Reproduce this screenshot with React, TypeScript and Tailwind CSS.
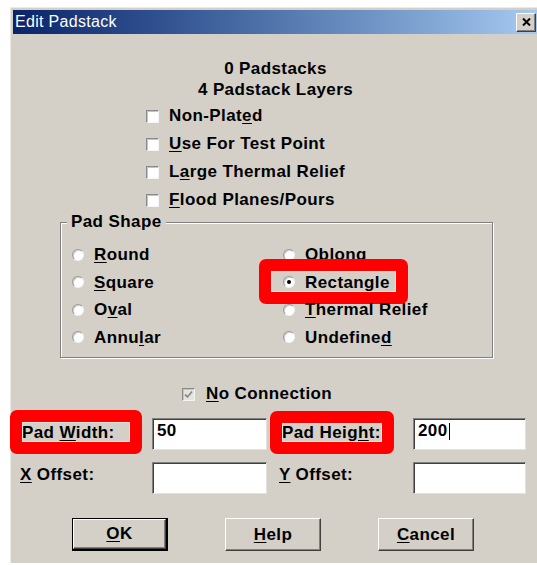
import type { ReactNode } from "react";

const face = "font-['Liberation_Sans',Arial,sans-serif]";

// "&" marks the access-key letter, drawn underlined like a Win32 label
function Mnemonic({ text }: { text: string }) {
  const i = text.indexOf("&");
  if (i < 0) return <>{text}</>;
  return (
    <>
      {text.slice(0, i)}
      <span className="underline decoration-1 underline-offset-[2px]">{text[i + 1]}</span>
      {text.slice(i + 2)}
    </>
  );
}

function CheckBox({ checked, disabled }: { checked?: boolean; disabled?: boolean }) {
  return (
    <span
      className={`w-[13px] h-[13px] shrink-0 flex items-center justify-center border border-t-[#8a8a8a] border-l-[#8a8a8a] border-r-[#f4f4f4] border-b-[#f4f4f4] shadow-[inset_1px_1px_0_#c4c4c4] ${
        disabled ? "bg-[#e6e4df]" : "bg-white"
      }`}
    >
      {checked && (
        <svg width="9" height="9" viewBox="0 0 9 9">
          <path d="M1 4.5 L3.5 7 L8 1.5" fill="none" stroke={disabled ? "#8c8c8c" : "#000"} strokeWidth="1.8" />
        </svg>
      )}
    </span>
  );
}

function Radio({ selected }: { selected?: boolean }) {
  return (
    <span className="w-[12px] h-[12px] shrink-0 rounded-full bg-white flex items-center justify-center border border-t-[#9a9a9a] border-l-[#9a9a9a] border-r-[#f2f2f2] border-b-[#f2f2f2] shadow-[inset_1px_1px_0_#d0d0d0]">
      {selected && <span className="w-[4px] h-[4px] rounded-full bg-black" />}
    </span>
  );
}

// red callout drawn over a control
function Callout({ className }: { className: string }) {
  return (
    <span
      className={`absolute border-[12px] border-[#ff0000] rounded-[7px] shadow-[inset_0_0_0_1px_#e8e6e1] pointer-events-none ${className}`}
    />
  );
}

function Field({ value, caret }: { value?: string; caret?: boolean }) {
  return (
    <div className="h-[32px] bg-white flex items-center pl-[4px] pb-[6px] border border-t-[#808080] border-l-[#808080] border-r-[#e4e2dc] border-b-[#e4e2dc] shadow-[inset_1px_1px_0_#404040]">
      {value}
      {caret && <span className="w-px h-[17px] bg-black ml-[1px]" />}
    </div>
  );
}

function Button({ label, isDefault }: { label: string; isDefault?: boolean }) {
  return (
    <div className={`w-[96px] h-[33px] ${isDefault ? "border border-black border-r-2 border-b-2" : ""}`}>
      <div className="w-full h-full flex items-center justify-center border border-t-white border-l-white border-r-[#404040] border-b-[#404040] shadow-[inset_-1px_-1px_0_#808080]">
        <Mnemonic text={label} />
      </div>
    </div>
  );
}

function Row({ children }: { children: ReactNode }) {
  return <div className="h-[28px] flex items-center gap-[10px]">{children}</div>;
}

const flags = ["Non-Plat&ed", "&Use For Test Point", "L&arge Thermal Relief", "&Flood Planes/Pours"];

const shapes: { label: string; selected?: boolean; callout?: boolean }[] = [
  { label: "&Round" },
  { label: "Oblong" },
  { label: "&Square" },
  { label: "Rectangle", selected: true, callout: true },
  { label: "O&val" },
  { label: "&Thermal Relief" },
  { label: "Annu&lar" },
  { label: "Undefine&d" },
];

export default function App() {
  return (
    <div className={`w-[537px] h-[565px] overflow-hidden bg-white pt-[7px] pl-[10px] ${face}`}>
      <div className="w-[530px] bg-[#d4d0c8] border-t border-l border-[#eceae5] p-[2px] pb-0">
        {/* caption */}
        <div className="h-[24px] flex items-center justify-between pl-[2px] pr-[2px] bg-linear-to-r from-[#0a246a] to-[#a6caf0]">
          <span className="text-[16px] tracking-[0.3px] text-white leading-none">Edit Padstack</span>
          <div className="w-[20px] h-[19px] bg-[#d4d0c8] flex items-center justify-center border border-t-white border-l-white border-r-[#404040] border-b-[#404040] shadow-[inset_-1px_-1px_0_#808080]">
            <svg width="9" height="8" viewBox="0 0 9 8">
              <path d="M1 0.5 L8 7.5 M8 0.5 L1 7.5" stroke="#000" strokeWidth="2" />
            </svg>
          </div>
        </div>

        <div className="flex flex-col pt-[24px] pb-[12px] text-[17px] tracking-[0.4px] font-bold text-black">
          <div className="h-[21px] leading-[21px] text-center">0 Padstacks</div>
          <div className="h-[21px] leading-[21px] text-center">4 Padstack Layers</div>

          <div className="mt-[2px] pl-[133px] flex flex-col">
            {flags.map((f) => (
              <Row key={f}>
                <CheckBox />
                <span>
                  <Mnemonic text={f} />
                </span>
              </Row>
            ))}
          </div>

          {/* Pad Shape group */}
          <div className="relative mt-[8px] ml-[47px] w-[433px] border border-[#808080] shadow-[inset_1px_1px_0_#fff,1px_1px_0_#fff] pt-[18px] pb-[6px] pl-[11px]">
            <span className="absolute left-[6px] top-[-12px] px-[4px] leading-[22px] bg-[#d4d0c8]">Pad Shape</span>
            <div className="grid grid-cols-[211px_1fr]">
              {shapes.map((s) => (
                <div key={s.label} className="relative h-[27.5px] flex items-center gap-[10px]">
                  <Radio selected={s.selected} />
                  <span>
                    <Mnemonic text={s.label} />
                  </span>
                  {s.callout && <Callout className="left-[-24px] top-[-10px] w-[149px] h-[45px]" />}
                </div>
              ))}
            </div>
          </div>

          <div className="mt-[24px] h-[24px] pl-[169px] flex items-center gap-[11px]">
            <CheckBox checked disabled />
            <span>
              <Mnemonic text="&No Connection" />
            </span>
          </div>

          {/* size fields */}
          <div className="mt-[12px] h-[32px] flex items-center">
            <div className="w-[139px] pl-[9px]">
              <span className="relative inline-block leading-[20px] mb-[6px]">
                <Mnemonic text="Pad &Width:" />
                <Callout className="left-[-12px] top-[-13px] w-[132px] h-[44px]" />
              </span>
            </div>
            <div className="w-[115px]">
              <Field value="50" />
            </div>
            <div className="w-[146px] pl-[15px]">
              <span className="relative inline-block leading-[20px] mb-[6px]">
                <Mnemonic text="Pad Heig&ht:" />
                <Callout className="left-[-12px] top-[-12px] w-[124px] h-[43px]" />
              </span>
            </div>
            <div className="w-[113px]">
              <Field value="200" caret />
            </div>
          </div>

          <div className="mt-[12px] h-[32px] flex items-center">
            <div className="w-[139px] pl-[7px] leading-[20px] mb-[6px]">
              <Mnemonic text="&X Offset:" />
            </div>
            <div className="w-[115px]">
              <Field />
            </div>
            <div className="w-[146px] pl-[12px] leading-[20px] mb-[6px]">
              <Mnemonic text="&Y Offset:" />
            </div>
            <div className="w-[113px]">
              <Field />
            </div>
          </div>

          <div className="mt-[24px] flex pl-[59px] gap-[57px]">
            <Button label="&OK" isDefault />
            <Button label="&Help" />
            <Button label="&Cancel" />
          </div>
        </div>
      </div>
    </div>
  );
}
